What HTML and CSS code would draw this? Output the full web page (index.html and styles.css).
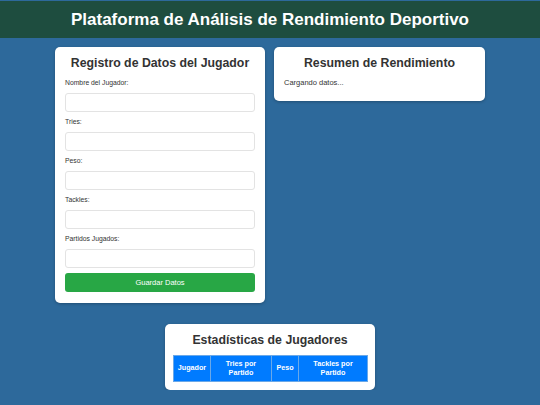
FILE: index.html
```html
<!DOCTYPE html>
<html lang="es">
<head>
<meta charset="utf-8">
<title>Plataforma de Análisis de Rendimiento Deportivo</title>
<link rel="stylesheet" href="styles.css">
</head>
<body>
<header class="topbar">
  <h1>Plataforma de Análisis de Rendimiento Deportivo</h1>
</header>
<main class="main">
  <div class="row">
    <section class="card form-card">
      <h2>Registro de Datos del Jugador</h2>
      <label>Nombre del Jugador:</label>
      <input type="text" class="field">
      <label>Tries:</label>
      <input type="text" class="field">
      <label>Peso:</label>
      <input type="text" class="field">
      <label>Tackles:</label>
      <input type="text" class="field">
      <label>Partidos Jugados:</label>
      <input type="text" class="field">
      <button class="btn">Guardar Datos</button>
    </section>
    <section class="card summary-card">
      <h2>Resumen de Rendimiento</h2>
      <p class="loading">Cargando datos...</p>
    </section>
  </div>
  <section class="card stats-card">
    <h2>Estadísticas de Jugadores</h2>
    <table class="stats">
      <thead>
        <tr>
          <th class="c1">Jugador</th>
          <th class="c2">Tries por Partido</th>
          <th class="c3">Peso</th>
          <th class="c4">Tackles por Partido</th>
        </tr>
      </thead>
    </table>
  </section>
</main>
</body>
</html>
```
FILE: styles.css
```css
html, body {
  margin: 0;
  padding: 0;
}
body {
  background: #2d699b;
  font-family: "Liberation Sans", Arial, sans-serif;
  color: #333;
  padding-top: 1px;
}
.topbar {
  background: #1e4d3f;
  height: 37px;
  display: flex;
  align-items: center;
  justify-content: center;
}
.topbar h1 {
  margin: 0;
  color: #fff;
  font-size: 17px;
  font-weight: bold;
}
.main {
  display: flex;
  flex-direction: column;
  align-items: center;
  padding-top: 9px;
}
.row {
  display: flex;
  gap: 9px;
  align-items: flex-start;
}
.card {
  background: #fff;
  border-radius: 5px;
  box-shadow: 0 1px 3px rgba(0,0,0,0.25);
  box-sizing: border-box;
  width: 211px;
  padding: 9px 10px 10px;
}
.form-card {
  width: 210px;
  padding-bottom: 11px;
}
.card h2 {
  margin: 0;
  text-align: center;
  font-size: 12.3px;
  line-height: 15px;
  font-weight: bold;
  color: #333;
}
.form-card h2 {
  margin-bottom: 7px;
}
.form-card label {
  display: block;
  font-size: 6.8px;
  line-height: 10px;
  color: #333;
  margin-bottom: 5px;
}
.field {
  display: block;
  box-sizing: border-box;
  width: 100%;
  height: 19px;
  border: 1px solid #e3e3e3;
  border-radius: 3px;
  margin: 0 0 5px;
  padding: 0;
  background: #fff;
}
.btn {
  display: block;
  width: 100%;
  height: 19px;
  margin-top: 1px;
  border: none;
  border-radius: 3px;
  background: #28a745;
  color: #fff;
  font-family: "Liberation Sans", Arial, sans-serif;
  font-size: 7.5px;
  padding: 0;
}
.summary-card {
  padding-bottom: 13px;
}
.summary-card h2 {
  margin-bottom: 7px;
}
.loading {
  margin: 0;
  font-size: 7.5px;
  line-height: 10px;
}
.stats-card {
  margin-top: 21px;
  width: 210px;
  padding: 9px 8px 8px;
}
.stats-card h2 {
  margin-bottom: 7px;
}
.stats {
  width: 100%;
  border-collapse: collapse;
  table-layout: fixed;
}
.stats th {
  box-sizing: border-box;
  background: #007bff;
  color: #fff;
  font-size: 7.2px;
  line-height: 8.5px;
  font-weight: bold;
  height: 26px;
  padding: 0 3px;
  border: 1px solid #6aa8e8;
  text-align: center;
}
.stats .c1 { width: 37px; }
.stats .c2 { width: 61px; }
.stats .c3 { width: 27px; }
.stats .c4 { width: 69px; }
```
